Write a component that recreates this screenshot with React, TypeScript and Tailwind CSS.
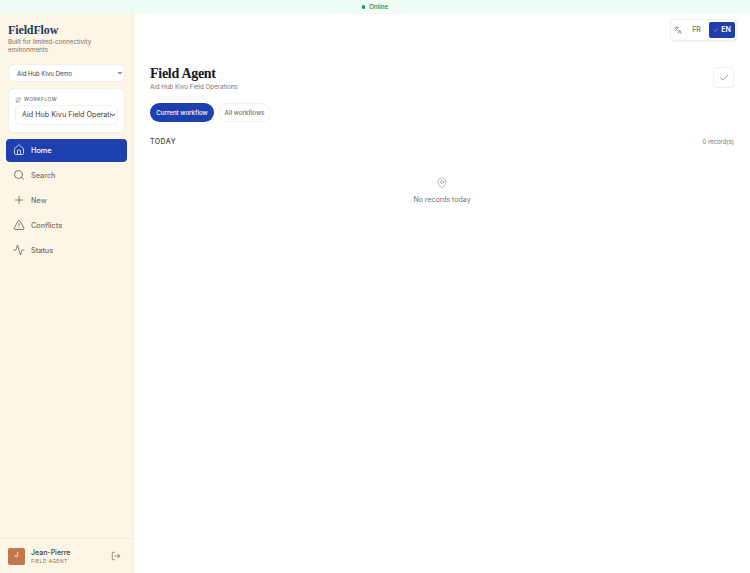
import { Home, Search, Plus, TriangleAlert, Activity, Route, LogOut, Languages, Check, MapPin, ChevronDown } from 'lucide-react';

const navItems = [
  { label: 'Home', icon: Home, active: true },
  { label: 'Search', icon: Search },
  { label: 'New', icon: Plus },
  { label: 'Conflicts', icon: TriangleAlert },
  { label: 'Status', icon: Activity },
];

export default function App() {
  return (
    <div className="h-[573px] w-[750px] overflow-hidden flex flex-col bg-white font-['Inter',sans-serif]">
      {/* Connection banner */}
      <div className="h-[14px] flex-shrink-0 bg-[#f0fdf6] flex items-center justify-center gap-[4px]">
        <span className="w-[3.5px] h-[3.5px] rounded-full bg-[#059669]" />
        <span className="text-[6.2px] leading-none font-medium text-[#15803d]">Online</span>
      </div>

      <div className="flex flex-1 min-h-0">
        {/* Sidebar */}
        <aside className="w-[134px] flex-shrink-0 flex flex-col bg-[#fdf5e6] border-r border-[#f1ebe0]">
          <div className="px-[8px] pt-[9px]">
            <h1 className="font-['Liberation_Serif',serif] font-bold text-[12px] tracking-[-0.01em] leading-[14px] text-[#1e3a5f]">FieldFlow</h1>
            <p className="mt-[1px] text-[6.25px] leading-[8px] text-[#78716c]">Built for limited-connectivity environments</p>
            <div className="relative mt-[10px] h-[18px] rounded-[5px] bg-white border border-[#f3efe7]">
              <select className="block appearance-none w-full h-full py-0 pl-[8px] text-[6px] text-[#44403c] bg-transparent outline-none" defaultValue="a">
                <option value="a">Aid Hub Kivu Demo</option>
              </select>
              <ChevronDown size={6} strokeWidth={4} className="absolute right-[1px] top-[5px] text-[#292524]" />
            </div>
            <div className="mt-[6px] h-[45px] rounded-[5px] bg-white border border-[#f3efe7] px-[6px] pt-[7px]">
              <div className="flex items-center gap-[3px] text-[#78716c]">
                <Route size={6} strokeWidth={1.5} />
                <span className="text-[5px] leading-[7px] font-medium tracking-[0.08em]">WORKFLOW</span>
              </div>
              <div className="relative mt-[2px] h-[20px] rounded-[5px] border border-[#f3efe7]">
                <select className="block appearance-none w-full h-full py-0 pl-[6px] pr-[6px] text-[7.2px] text-[#44403c] bg-transparent outline-none" defaultValue="a">
                  <option value="a">Aid Hub Kivu Field Operations</option>
                </select>
                <ChevronDown size={6} strokeWidth={4} className="absolute right-[1px] top-[6px] text-[#292524]" />
              </div>
            </div>
          </div>

          <nav className="mt-[6px] px-[6px] flex flex-col gap-[2px]">
            {navItems.map((item) => (
              <div
                key={item.label}
                className={`h-[23px] rounded-[4px] flex items-center gap-[6px] px-[7px] ${item.active ? 'bg-[#1e40af] text-white' : 'text-[#78716c]'}`}
              >
                <item.icon size={12} strokeWidth={1.5} className={`mb-[1px] ${item.active ? 'text-white' : 'text-[#57534e]'}`} />
                <span className="text-[7.3px] leading-[13px] font-medium">{item.label}</span>
              </div>
            ))}
          </nav>

          <div className="mt-auto h-[35px] border-t border-[#f1ebe0] px-[8px] flex items-center">
            <div className="w-[17px] h-[17px] rounded-[2px] bg-[#c2784a] flex items-center justify-center text-white text-[6.5px] font-medium">J</div>
            <div className="ml-[6px] flex-1">
              <div className="text-[7px] leading-[9px] font-medium text-[#44403c]">Jean-Pierre</div>
              <div className="text-[5px] leading-[8px] tracking-[0.08em] text-[#78716c]">FIELD AGENT</div>
            </div>
            <LogOut size={10} strokeWidth={1.5} className="mr-[4px] text-[#57534e]" />
          </div>
        </aside>

        {/* Main */}
        <main className="flex-1 min-w-0 flex flex-col">
          <div className="flex justify-end pt-[5px] pr-[13px]">
            <div className="w-[67px] h-[22px] rounded-[4px] bg-white border border-[#f0f0f0] shadow-xs py-[2px] pr-[1px] flex items-center">
              <Languages size={8} strokeWidth={1.5} className="ml-[3px] text-[#57534e]" />
              <span className="flex-1 ml-[2px] text-center text-[7px] leading-[16px] font-medium text-[#78716c]">FR</span>
              <div className="h-full w-[26px] rounded-[2px] bg-[#1e40af] text-white flex items-center justify-center gap-[2px]">
                <Check size={6} strokeWidth={1.5} />
                <span className="text-[7px] leading-[16px] font-semibold">EN</span>
              </div>
            </div>
          </div>

          <div className="mt-[26px] px-[16px]">
            <div className="flex items-start justify-between">
              <div>
                <h2 className="font-['Liberation_Serif',serif] font-bold text-[14px] tracking-[-0.02em] leading-[13px] text-[#111827]">Field Agent</h2>
                <p className="mt-[2px] text-[6.2px] leading-[10px] text-[#78716c]">Aid Hub Kivu Field Operations</p>
              </div>
              <div className="w-[21px] h-[21px] rounded-[3px] border border-[#f0f0f0] bg-white flex items-center justify-center text-[#57534e]">
                <Check size={10} strokeWidth={1.5} />
              </div>
            </div>

            <div className="mt-[11px] flex items-center gap-[4px]">
              <div className="h-[19px] w-[64px] rounded-full bg-[#1e40af] text-white text-[6.2px] font-medium flex items-center justify-center">Current workflow</div>
              <div className="h-[19px] w-[53px] rounded-full border border-[#f0f0f0] text-[#78716c] text-[6.2px] font-medium flex items-center justify-center">All workflows</div>
            </div>

            <div className="mt-[15px] flex items-center justify-between">
              <span className="text-[7px] leading-[10px] font-medium tracking-[0.06em] text-[#44403c]">TODAY</span>
              <span className="text-[6px] leading-[10px] text-[#78716c]">0 record(s)</span>
            </div>

            <div className="mt-[30px] flex flex-col items-center">
              <MapPin size={12} strokeWidth={1} className="text-[#78716c]" />
              <p className="mt-[6px] text-[7px] leading-[9px] text-[#78716c]">No records today</p>
            </div>
          </div>
        </main>
      </div>
    </div>
  );
}
